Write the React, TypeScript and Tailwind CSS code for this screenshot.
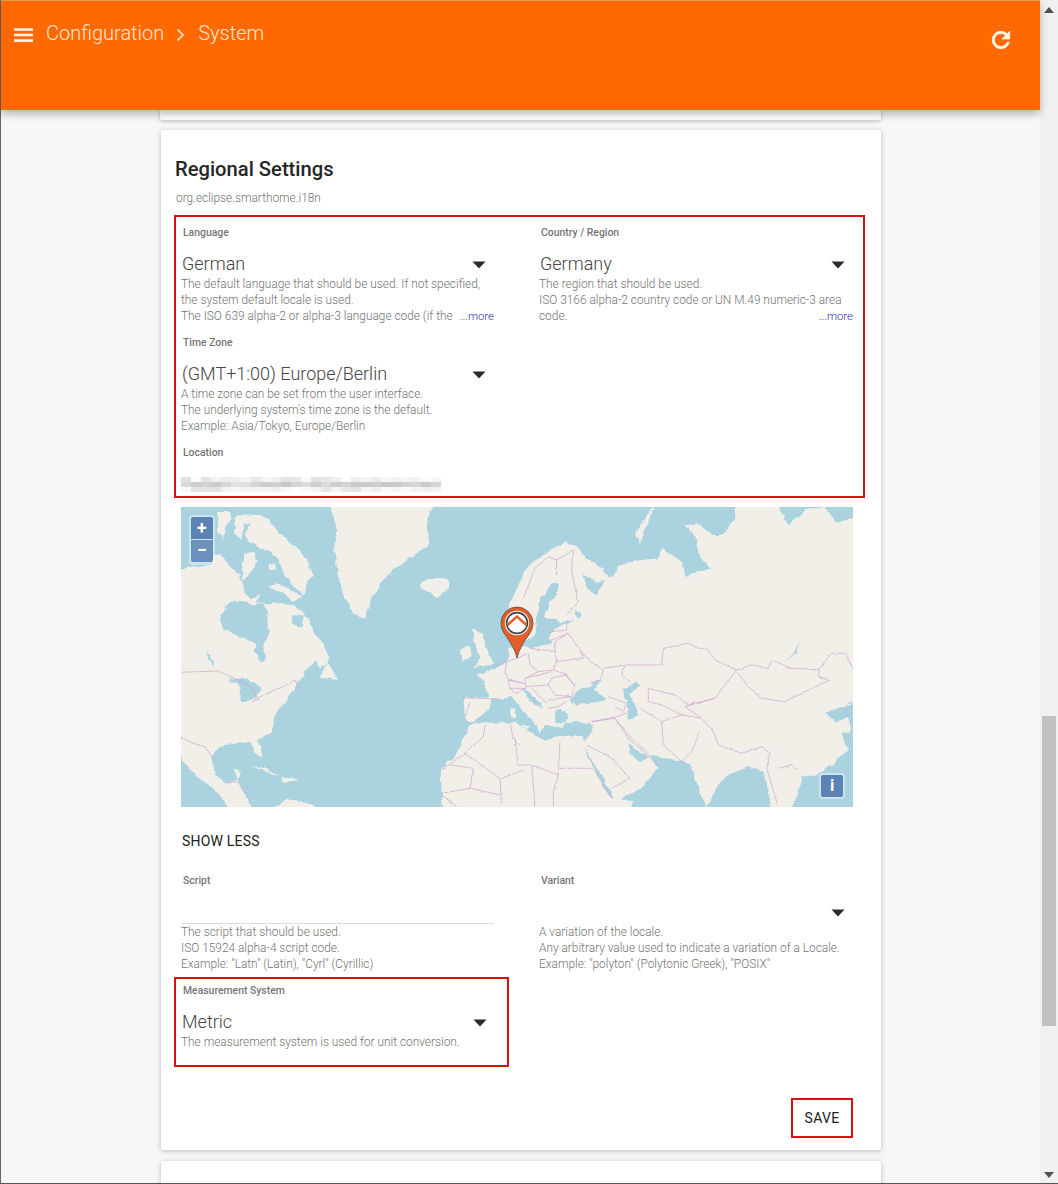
import type { ReactNode } from 'react'

const MOSAIC = Array.from({ length: 3 * 52 }, (_, i) => {
  const col = Math.floor((i % 52) / 2)
  const row = Math.floor(i / 52)
  const n = Math.abs(Math.sin((col + row * 31) * 12.9898) * 43758.5453) % 1
  const v = Math.round((row === 1 ? 198 : 226) + n * 28)
  return `rgb(${v},${v},${v})`
})

function Arrow() {
  return (
    <svg width="14" height="8" viewBox="0 0 14 8" className="mt-[3px] mr-[8px] shrink-0">
      <polygon points="0.5,0.5 13.5,0.5 7,7.5" fill="#2b2b2b" />
    </svg>
  )
}

function Field({ label, value, arrow, line, more, children }: {
  label: string
  value?: string
  arrow?: boolean
  line?: boolean
  more?: boolean
  children?: ReactNode
}) {
  return (
    <div className="h-[110px]">
      <div className="h-5 pl-[2px] text-[10.4px] leading-5 font-medium text-[#757575]">{label}</div>
      <div className={`mt-[7px] h-[26px] flex items-center justify-between pl-[1px] ${line ? 'border-b border-[#dcdcdc]' : ''}`}>
        <span className="text-[18px] font-light text-[#444] whitespace-nowrap">{value}</span>
        {arrow && <Arrow />}
      </div>
      <div className="relative text-[11.88px] leading-4 font-light text-[#737373]">
        {children}
        {more && (
          <span className="absolute right-0 bottom-0 text-[11.4px] text-[#2a2ac0]">...more</span>
        )}
      </div>
    </div>
  )
}

function WorldMap() {
  const land = '#f2efe9'
  const water = '#aad3df'
  const border = '#cfa6d0'
  return (
    <svg viewBox="0 0 672 300" width="672" height="300" className="block">
      <defs>
        <filter id="coast" x="0" y="0" width="100%" height="100%" colorInterpolationFilters="sRGB">
          <feTurbulence type="fractalNoise" baseFrequency="0.13" numOctaves="3" seed="4" result="n" />
          <feDisplacementMap in="SourceGraphic" in2="n" scale="5" xChannelSelector="R" yChannelSelector="G" />
          <feGaussianBlur stdDeviation="0.3" />
        </filter>
        <filter id="wobble" x="0" y="0" width="100%" height="100%" colorInterpolationFilters="sRGB">
          <feTurbulence type="fractalNoise" baseFrequency="0.2" numOctaves="2" seed="9" result="n" />
          <feDisplacementMap in="SourceGraphic" in2="n" scale="2.5" xChannelSelector="R" yChannelSelector="G" />
        </filter>
      </defs>
      <rect width="672" height="300" fill={water} />

      <g filter="url(#coast)">
        <rect width="672" height="300" fill={water} />
        {/* west half, crop coords */}
        <g transform="translate(-1,-2) scale(0.3333)">
          <g fill={land}>
            <path d="M445 -20 L765 -20 L740 60 L745 120 L700 150 L650 185 L600 235 L570 290 L555 340 L520 325 L490 270 L475 215 L462 130 L470 70 Z" />
            <path d="M722 235 L745 220 L800 220 L810 245 L770 278 L740 260 Z" />
            <path d="M840 437 L870 420 L875 450 L845 470 Z" />
            <path d="M420 518 L440 470 L475 525 Z" />
            <path d="M113 21 L150 21 L155 40 L135 70 L128 105 L112 70 Z" />
            <path d="M163 40 L190 28 L240 30 L270 45 L295 85 L330 110 L350 130 L375 160 L402 210 L380 240 L375 270 L345 245 L315 215 L300 175 L265 135 L240 130 L205 110 L195 85 L210 50 L190 60 L185 105 L165 85 Z" />
            <path d="M195 145 L225 140 L232 170 L215 200 L190 230 L185 195 Z" />
            <path d="M268 178 L285 175 L288 190 L272 198 Z" />
            <path d="M262 246 L290 235 L320 245 L345 262 L372 272 L340 290 L305 262 Z" />
            <path d="M-10 205 L25 185 L95 180 L105 150 L125 150 L140 175 L165 200 L180 205 L175 215 L195 245 L190 265 L215 280 L240 268 L228 295 L255 296 L310 290 L340 300 L372 325 L400 375 L430 420 L450 462 L420 490 L380 505 L350 540 L325 580 L290 620 L275 680 L235 705 L245 758 L225 745 L215 712 L170 715 L120 722 L95 755 L105 810 L135 835 L170 825 L185 800 L160 790 L190 860 L215 905 L230 925 L160 925 L100 850 L50 815 L0 755 L-10 750 Z" />
            <path d="M205 782 L260 790 L300 815 L255 798 Z" />
            <path d="M305 815 L362 825 L310 830 Z" />
            <path d="M280 910 L320 882 L400 898 L412 925 L280 925 Z" />
            <path d="M850 575 L940 578 L925 620 L880 652 L855 640 Z" />
            <path d="M890 510 L950 490 L985 468 L1010 440 L1045 430 L1045 610 L1000 590 L960 582 L925 578 L912 530 Z" />
            <path d="M782 795 L830 745 L870 660 L920 650 L1045 640 L1045 925 L790 925 L785 860 Z" />
          </g>
          <g fill={water}>
            <path d="M120 345 L130 315 L150 290 L185 290 L215 298 L250 298 L262 320 L262 345 L270 385 L250 420 L255 468 L240 472 L225 440 L225 415 L180 395 L130 370 Z" />
            <path d="M338 330 L372 335 L362 365 L340 358 Z" />
            <path d="M82 437 L100 470 L101 487 L88 465 Z" />
            <path d="M142 525 L200 518 L245 548 L228 580 L195 592 L178 590 L180 552 L170 535 Z" />
            <path d="M370 500 L410 470 L420 490 L380 520 Z" />
          </g>
        </g>
        {/* east half, crop coords */}
        <g transform="translate(334,-2) scale(0.3333)">
          <g fill={land}>
            <path d="M-20 310 L10 240 L40 180 L100 140 L150 110 L185 125 L215 160 L265 190 L280 215 L300 215 L310 180 L340 170 L430 160 L440 130 L500 170 L515 215 L550 200 L590 190 L555 160 L540 90 L510 60 L550 55 L590 90 L625 90 L660 40 L665 -20 L780 -20 L820 60 L880 10 L930 10 L960 50 L1040 40 L1040 590 L985 605 L930 620 L960 650 L1000 640 L1010 680 L980 680 L1000 735 L960 770 L900 810 L860 815 L850 860 L825 925 L770 925 L760 850 L745 800 L700 785 L640 810 L610 840 L575 910 L555 860 L530 790 L505 770 L440 755 L405 750 L430 790 L380 850 L300 890 L290 860 L240 780 L205 720 L225 680 L-20 680 Z" />
            <path d="M360 90 L395 30 L425 -10 L395 60 L375 120 Z" />
            <path d="M-25 660 L200 660 L215 740 L290 880 L355 885 L340 925 L-25 925 Z" />
            <path d="M945 770 L960 770 L950 790 Z" />
          </g>
          <g fill={water}>
            <path d="M200 205 L245 235 L270 225 L245 268 L225 258 Z" />
            <path d="M205 722 L240 780 L292 868 L280 870 L235 790 Z" />
            <path d="M335 715 L375 745 L405 750 L375 772 L345 745 Z" />
            <path d="M858 408 L845 445 L810 470 L838 445 Z" />
            <path d="M110 238 L132 235 L125 270 L105 290 L85 330 L70 400 L60 350 L80 290 Z" />
          </g>
        </g>
        {/* europe, crop coords */}
        <g transform="translate(299,93) scale(0.3333)">
          <g fill={water}>
            <path d="M-10 -10 L70 -10 L65 30 L65 70 L110 100 L135 130 L120 145 L100 135 L60 170 L50 190 L-10 215 Z" />
            <path d="M180 -10 L212 -10 L205 20 L195 50 L240 65 L285 62 L245 75 L225 85 L205 110 L215 130 L150 145 L125 135 L165 105 L170 80 L175 50 Z" />
            <path d="M285 30 L303 35 L305 52 L290 55 Z" />
            <path d="M38 296 L60 300 L95 290 L120 320 L145 350 L170 375 L180 395 L195 375 L215 375 L250 385 L258 365 L330 368 L340 385 L330 410 L240 405 L195 425 L105 368 L20 368 L25 335 Z" />
            <path d="M130 265 L160 285 L190 325 L170 320 L135 285 Z" />
            <path d="M230 330 L265 340 L255 368 L225 370 Z" />
            <path d="M275 290 L300 265 L330 262 L345 245 L370 240 L340 268 L380 300 L330 310 L285 315 L270 300 Z" />
            <path d="M430 265 L470 245 L482 255 L450 280 L478 345 L445 360 L440 310 Z" />
          </g>
          <g fill={land}>
            <path d="M-25 85 L5 100 L25 160 L40 190 L-20 205 L0 170 L-15 130 Z" />
            <path d="M92 325 L105 325 L105 355 L90 350 Z" />
            <path d="M120 375 L150 375 L140 390 Z" />
          </g>
        </g>
      </g>

      <g filter="url(#wobble)" fill="none" stroke={border} strokeWidth="2.2">
        <g transform="translate(-1,-2) scale(0.3333)">
          <path d="M0 502 L115 498 L140 510 L215 545 L230 575 L218 590 L250 570 L320 540 L345 525 L360 560" />
          <path d="M0 695 L40 715 L75 725 L95 755" />
          <path d="M140 835 L175 830 L190 860 L215 880" />
          <path d="M785 795 L855 745 L960 820 L965 900" />
          <path d="M855 745 L910 695 L915 660" />
          <path d="M990 655 L1000 700 L1020 720" />
          <path d="M965 820 L1030 795" />
          <path d="M785 865 L870 850 L880 790 L810 780" />
          <path d="M785 870 L830 905" />
          <path d="M870 850 L960 870" />
          <path d="M850 578 L950 582" />
          <path d="M870 590 L855 640" />
        </g>
        <g transform="translate(334,-2) scale(0.3333)">
          <path d="M25 280 L60 190 L100 155 L125 165 L125 210" />
          <path d="M125 165 L175 135 L170 200 L190 290 L155 330" />
          <path d="M330 480 L440 480 L445 430 L520 415 L550 430 L575 430 L600 465 L665 495 L630 540 L600 580 L520 600 L480 570 L400 550 L400 590" />
          <path d="M265 490 L330 480 L320 510 L345 530" />
          <path d="M665 495 L710 480 L760 490 L770 465 L830 490 L910 495 L950 445 L990 445 L1014 490" />
          <path d="M670 505 L700 545 L740 580 L810 590 L870 560 L945 525 L910 515 L915 490" />
          <path d="M600 580 L510 605 L560 640 L595 680 L610 720 L680 745 L740 725 L765 745 L755 790" />
          <path d="M300 640 L340 690 L400 745" />
          <path d="M375 610 L440 650 L445 720 L500 770 L530 740 L555 680" />
          <path d="M440 650 L500 630 L560 640" />
          <path d="M400 590 L440 600 L500 630" />
          <path d="M230 650 L300 640 L340 700 L430 780" />
          <path d="M215 720 L290 760 L345 820 L290 850" />
          <path d="M0 700 L10 780 L50 780 L130 810 L135 710" />
          <path d="M135 790 L235 790" />
          <path d="M50 780 L60 905" />
          <path d="M130 810 L115 860 L115 905" />
          <path d="M235 790 L290 880" />
          <path d="M755 790 L790 905" />
          <path d="M790 790 L830 780 L850 800" />
          <path d="M1014 590 L990 605 L1000 640" />
        </g>
        <g transform="translate(299,93) scale(0.3333)">
          <path d="M80 185 L110 175 L145 160 L150 195 L175 215 L135 235 L135 250 L85 240 L75 215 Z" />
          <path d="M150 145 L225 155 L230 185 L220 210 L175 215" />
          <path d="M225 155 L225 125 L265 100 L300 150 L310 175 L230 185" />
          <path d="M215 120 L265 100" />
          <path d="M210 95 L260 90 L265 60" />
          <path d="M300 150 L325 180 L370 210 L360 240 L330 250" />
          <path d="M220 210 L260 225 L285 260" />
          <path d="M215 235 L255 225 L285 255 L275 290 L225 285 L205 255 L215 235" />
          <path d="M135 235 L215 215" />
          <path d="M140 260 L205 255" />
          <path d="M155 265 L200 310" />
          <path d="M205 300 L275 290" />
          <path d="M205 325 L235 320 L260 305" />
          <path d="M85 240 L135 250 L140 265 L90 265 L85 240" />
          <path d="M90 265 L105 280 L135 265" />
          <path d="M45 195 L80 185" />
          <path d="M385 290 L440 310 L430 335 L405 320" />
          <path d="M335 365 L410 350 L440 340" />
        </g>
      </g>

      {/* marker */}
      <g transform="translate(336,116)">
        <path d="M0 35 C-2 26 -7 19 -11 13 C-14 9 -16 5 -16 0 A16 16 0 0 1 16 0 C16 5 14 9 11 13 C7 19 2 26 0 35 Z" fill="#e25f2b" stroke="#5b4a44" strokeWidth="0.8" />
        <circle r="12.2" fill="#fff" />
        <circle r="10.4" fill="none" stroke="#444" strokeWidth="1.6" />
        <path d="M-9.5 2 L0 -6.5 L9.5 2" fill="none" stroke="#e25f2b" strokeWidth="2.4" />
      </g>
    </svg>
  )
}

export default function App() {
  return (
    <div className="h-[1184px] w-[1058px] overflow-hidden flex flex-col bg-[#f7f7f7] font-[family-name:Roboto,sans-serif] border-b border-[#555]">
      <div className="flex flex-1 min-h-0">
        <div className="w-[1040px] flex flex-col border-l border-[#666] relative">
          <header className="relative z-10 h-[110px] shrink-0 bg-[#ff6900] border-t border-[#e8a050] shadow-[0_4px_8px_rgba(0,0,0,0.28)] flex items-start text-[#fde8d4]">
            <svg width="20" height="14" viewBox="0 0 20 14" className="ml-[13px] mt-[27px]">
              <path d="M0 0.2h19v2.6H0zM0 5.7h19v2.6H0zM0 11.2h19V14H0z" fill="#fff2e6" />
            </svg>
            <span className="ml-[12px] mt-[19px] text-[20px] leading-[26px] font-light">Configuration</span>
            <svg width="10" height="14" viewBox="0 0 10 14" className="ml-[12px] mt-[27px]">
              <path d="M1.5 1.5 L7 7 L1.5 12.5" fill="none" stroke="#fcd2ac" strokeWidth="2" />
            </svg>
            <span className="ml-[12px] mt-[19px] text-[20px] leading-[26px] font-light">System</span>
            <svg width="26" height="26" viewBox="0 0 24 24" className="ml-auto mr-[26px] mt-[26px]">
              <path d="M17.65 6.35C16.2 4.9 14.21 4 12 4c-4.42 0-7.99 3.58-7.99 8s3.57 8 7.99 8c3.73 0 6.84-2.55 7.73-6h-2.08c-.82 2.33-3.04 4-5.65 4-3.31 0-6-2.69-6-6s2.69-6 6-6c1.66 0 3.14.69 4.22 1.78L13 11h7V4l-2.35 2.35z" fill="#fff7ee" stroke="#fff7ee" strokeWidth="0.8" />
            </svg>
          </header>

          <div className="flex-1 min-h-0 overflow-hidden">
            <div className="w-[721px] ml-[159px] h-[10px] bg-white rounded-b-[2px] shadow-[0_1px_4px_rgba(0,0,0,0.25)]" />

            <section className="mt-[10px] w-[720px] ml-[160px] h-[1020px] bg-white rounded-[2px] pl-[13px] pr-[16px] shadow-[0_1px_5px_rgba(0,0,0,0.25)]">
              <h2 className="pt-[26px] pl-[1px] text-[20.2px] leading-[26px] font-medium text-[#262626]">Regional Settings</h2>
              <div className="mt-[8px] pl-[2px] text-[11.85px] leading-4 font-light text-[#737373]">org.eclipse.smarthome.i18n</div>

              <div className="mt-[9px] h-[283px] border-2 border-[#d90f14] pt-[6px] pl-[5px]">
                <div className="grid grid-cols-[313px_314px] gap-x-[45px]">
                  <Field label="Language" value="German" arrow more>
                    <div>The default language that should be used. If not specified,</div>
                    <div>the system default locale is used.</div>
                    <div>The ISO 639 alpha-2 or alpha-3 language code (if the</div>
                  </Field>
                  <Field label="Country / Region" value="Germany" arrow more>
                    <div>The region that should be used.</div>
                    <div>ISO 3166 alpha-2 country code or UN M.49 numeric-3 area</div>
                    <div>code.</div>
                  </Field>
                  <Field label="Time Zone" value="(GMT+1:00) Europe/Berlin" arrow>
                    <div>A time zone can be set from the user interface.</div>
                    <div>The underlying system's time zone is the default.</div>
                    <div>Example: Asia/Tokyo, Europe/Berlin</div>
                  </Field>
                  <div />
                  <div>
                    <div className="h-5 pl-[2px] text-[10.4px] leading-5 font-medium text-[#757575]">Location</div>
                    <div className="mt-[14px] w-[260px] h-[15px] grid grid-cols-[repeat(52,5px)] grid-rows-[repeat(3,5px)] blur-[0.6px]">
                      {MOSAIC.map((c, i) => <div key={i} style={{ backgroundColor: c }} />)}
                    </div>
                  </div>
                </div>
              </div>

              <div className="relative mt-[9px] ml-[7px] w-[672px] h-[300px]">
                <WorldMap />
                <div className="absolute left-[8px] top-[8px] w-[26px] h-[50px] rounded-[4px] bg-white/40 p-[2px] flex flex-col gap-[1px]">
                  <div className="h-[22px] rounded-t-[2px] bg-[#5c83b5] text-white text-[18px] leading-[21px] font-bold text-center">+</div>
                  <div className="h-[22px] rounded-b-[2px] bg-[#6e90bc] text-white text-[18px] leading-[20px] font-bold text-center">−</div>
                </div>
                <div className="absolute right-[8px] bottom-[8px] w-[26px] h-[26px] rounded-[4px] bg-white/40 p-[2px]">
                  <div className="h-[22px] rounded-[2px] bg-[#5c83b5] text-white text-[16px] leading-[22px] font-bold text-center">i</div>
                </div>
              </div>

              <div className="mt-[24px] ml-[8px] h-5 text-[14px] leading-5 font-normal tracking-[0.2px] text-[#212121]">SHOW LESS</div>

              <div className="mt-[20px] ml-[7px] grid grid-cols-[313px_314px] gap-x-[45px]">
                <Field label="Script" line>
                  <div>The script that should be used.</div>
                  <div>ISO 15924 alpha-4 script code.</div>
                  <div>Example: "Latn" (Latin), "Cyrl" (Cyrillic)</div>
                </Field>
                <Field label="Variant" arrow>
                  <div>A variation of the locale.</div>
                  <div>Any arbitrary value used to indicate a variation of a Locale.</div>
                  <div>Example: "polyton" (Polytonic Greek), "POSIX"</div>
                </Field>
                <div className="-mt-[4px] -ml-[7px] w-[335px] h-[90px] border-2 border-[#d90f14] pt-[2px] pl-[5px] pr-[12px]">
                  <Field label="Measurement System" value="Metric" arrow>
                    <div>The measurement system is used for unit conversion.</div>
                  </Field>
                </div>
              </div>

              <div className="mt-[31px] flex justify-end pr-[12px]">
                <button className="w-[62px] h-[40px] border-2 border-[#d90f14] text-[14px] font-normal tracking-[0.3px] text-[#212121]">SAVE</button>
              </div>
            </section>

            <div className="mt-[11px] w-[720px] ml-[160px] h-[40px] bg-white rounded-t-[2px] shadow-[0_1px_5px_rgba(0,0,0,0.25)]" />
          </div>
        </div>

        <aside className="w-[18px] flex flex-col items-center bg-[#f1f1f1]">
          <svg width="10" height="6" viewBox="0 0 10 6" className="mt-[7px]">
            <polygon points="5,0 10,6 0,6" fill="#505050" />
          </svg>
          <div className="mt-[703px] w-[14px] h-[310px] bg-[#c1c1c1]" />
          <div className="flex-1" />
          <svg width="10" height="6" viewBox="0 0 10 6" className="mb-[5px]">
            <polygon points="0,0 10,0 5,6" fill="#505050" />
          </svg>
        </aside>
      </div>
    </div>
  )
}
